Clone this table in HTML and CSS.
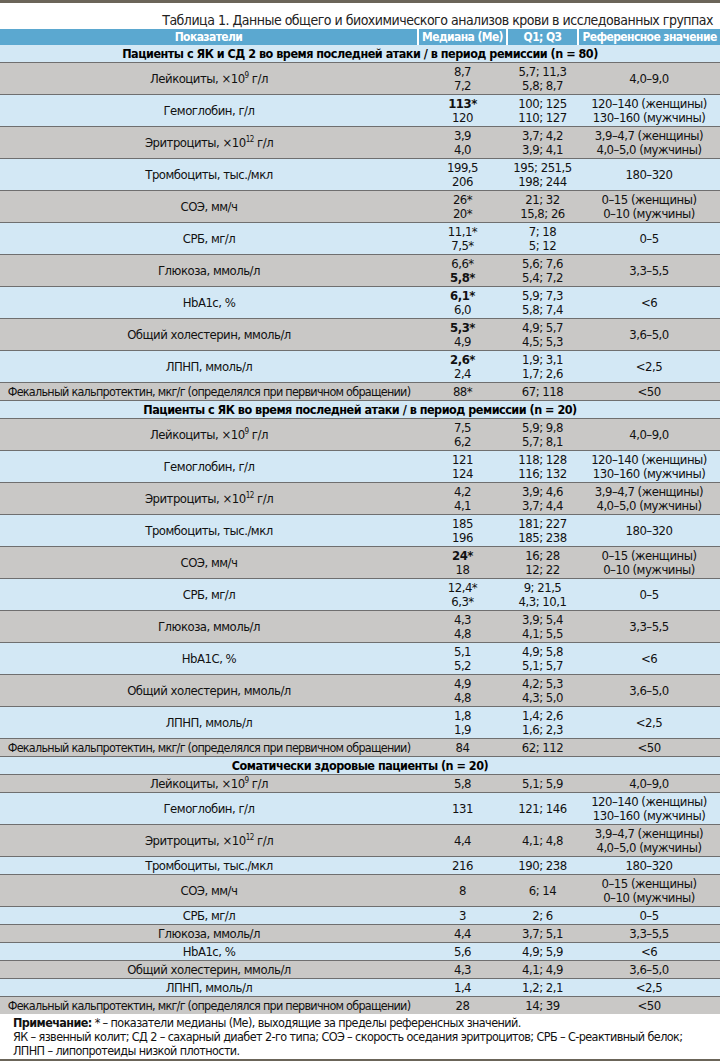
FILE: index.html
```html
<!DOCTYPE html>
<html lang="ru">
<head>
  <meta charset="UTF-8">
  <meta name="viewport" content="width=device-width, initial-scale=1.0">
  <title>Таблица 1</title>
  <link rel="stylesheet" href="styles.css">
</head>
<body>
  <div class="rule"></div>
  <p class="caption">Таблица 1. Данные общего и биохимического анализов крови в исследованных группах</p>

  <table class="data">
    <colgroup>
      <col class="c-name">
      <col class="c-med">
      <col class="c-q">
      <col class="c-ref">
    </colgroup>
    <thead>
      <tr>
        <th>Показатели</th>
        <th>Медиана (Ме)</th>
        <th>Q1; Q3</th>
        <th>Референсное значение</th>
      </tr>
    </thead>
    <tbody>
      <!-- группа 1 -->
      <tr class="group"><td colspan="4">Пациенты с ЯК и СД 2 во время последней атаки / в период ремиссии (n = 80)</td></tr>
      <tr><td>Лейкоциты, ×10<sup>9</sup> г/л</td><td>8,7<br>7,2</td><td>5,7; 11,3<br>5,8; 8,7</td><td>4,0–9,0</td></tr>
      <tr><td>Гемоглобин, г/л</td><td><b>113*</b><br>120</td><td>100; 125<br>110; 127</td><td>120–140 (женщины)<br>130–160 (мужчины)</td></tr>
      <tr><td>Эритроциты, ×10<sup>12</sup> г/л</td><td>3,9<br>4,0</td><td>3,7; 4,2<br>3,9; 4,1</td><td>3,9–4,7 (женщины)<br>4,0–5,0 (мужчины)</td></tr>
      <tr><td>Тромбоциты, тыс./мкл</td><td>199,5<br>206</td><td>195; 251,5<br>198; 244</td><td>180–320</td></tr>
      <tr><td>СОЭ, мм/ч</td><td>26*<br>20*</td><td>21; 32<br>15,8; 26</td><td>0–15 (женщины)<br>0–10 (мужчины)</td></tr>
      <tr><td>СРБ, мг/л</td><td>11,1*<br>7,5*</td><td>7; 18<br>5; 12</td><td>0–5</td></tr>
      <tr><td>Глюкоза, ммоль/л</td><td>6,6*<br><b>5,8*</b></td><td>5,6; 7,6<br>5,4; 7,2</td><td>3,3–5,5</td></tr>
      <tr><td>HbA1c, %</td><td><b>6,1*</b><br>6,0</td><td>5,9; 7,3<br>5,8; 7,4</td><td>&lt;6</td></tr>
      <tr><td>Общий холестерин, ммоль/л</td><td><b>5,3*</b><br>4,9</td><td>4,9; 5,7<br>4,5; 5,3</td><td>3,6–5,0</td></tr>
      <tr><td>ЛПНП, ммоль/л</td><td><b>2,6*</b><br>2,4</td><td>1,9; 3,1<br>1,7; 2,6</td><td>&lt;2,5</td></tr>
      <tr><td class="long">Фекальный кальпротектин, мкг/г (определялся при первичном обращении)</td><td>88*</td><td>67; 118</td><td>&lt;50</td></tr>

      <!-- группа 2 -->
      <tr class="group"><td colspan="4">Пациенты с ЯК во время последней атаки / в период ремиссии (n = 20)</td></tr>
      <tr><td>Лейкоциты, ×10<sup>9</sup> г/л</td><td>7,5<br>6,2</td><td>5,9; 9,8<br>5,7; 8,1</td><td>4,0–9,0</td></tr>
      <tr><td>Гемоглобин, г/л</td><td>121<br>124</td><td>118; 128<br>116; 132</td><td>120–140 (женщины)<br>130–160 (мужчины)</td></tr>
      <tr><td>Эритроциты, ×10<sup>12</sup> г/л</td><td>4,2<br>4,1</td><td>3,9; 4,6<br>3,7; 4,4</td><td>3,9–4,7 (женщины)<br>4,0–5,0 (мужчины)</td></tr>
      <tr><td>Тромбоциты, тыс./мкл</td><td>185<br>196</td><td>181; 227<br>185; 238</td><td>180–320</td></tr>
      <tr><td>СОЭ, мм/ч</td><td><b>24*</b><br>18</td><td>16; 28<br>12; 22</td><td>0–15 (женщины)<br>0–10 (мужчины)</td></tr>
      <tr><td>СРБ, мг/л</td><td>12,4*<br>6,3*</td><td>9; 21,5<br>4,3; 10,1</td><td>0–5</td></tr>
      <tr><td>Глюкоза, ммоль/л</td><td>4,3<br>4,8</td><td>3,9; 5,4<br>4,1; 5,5</td><td>3,3–5,5</td></tr>
      <tr><td>HbA1C, %</td><td>5,1<br>5,2</td><td>4,9; 5,8<br>5,1; 5,7</td><td>&lt;6</td></tr>
      <tr><td>Общий холестерин, ммоль/л</td><td>4,9<br>4,8</td><td>4,2; 5,3<br>4,3; 5,0</td><td>3,6–5,0</td></tr>
      <tr><td>ЛПНП, ммоль/л</td><td>1,8<br>1,9</td><td>1,4; 2,6<br>1,6; 2,3</td><td>&lt;2,5</td></tr>
      <tr><td class="long">Фекальный кальпротектин, мкг/г (определялся при первичном обращении)</td><td>84</td><td>62; 112</td><td>&lt;50</td></tr>

      <!-- группа 3 -->
      <tr class="group"><td colspan="4">Соматически здоровые пациенты (n = 20)</td></tr>
      <tr><td>Лейкоциты, ×10<sup>9</sup> г/л</td><td>5,8</td><td>5,1; 5,9</td><td>4,0–9,0</td></tr>
      <tr><td>Гемоглобин, г/л</td><td>131</td><td>121; 146</td><td>120–140 (женщины)<br>130–160 (мужчины)</td></tr>
      <tr><td>Эритроциты, ×10<sup>12</sup> г/л</td><td>4,4</td><td>4,1; 4,8</td><td>3,9–4,7 (женщины)<br>4,0–5,0 (мужчины)</td></tr>
      <tr><td>Тромбоциты, тыс./мкл</td><td>216</td><td>190; 238</td><td>180–320</td></tr>
      <tr><td>СОЭ, мм/ч</td><td>8</td><td>6; 14</td><td>0–15 (женщины)<br>0–10 (мужчины)</td></tr>
      <tr><td>СРБ, мг/л</td><td>3</td><td>2; 6</td><td>0–5</td></tr>
      <tr><td>Глюкоза, ммоль/л</td><td>4,4</td><td>3,7; 5,1</td><td>3,3–5,5</td></tr>
      <tr><td>HbA1c, %</td><td>5,6</td><td>4,9; 5,9</td><td>&lt;6</td></tr>
      <tr><td>Общий холестерин, ммоль/л</td><td>4,3</td><td>4,1; 4,9</td><td>3,6–5,0</td></tr>
      <tr><td>ЛПНП, ммоль/л</td><td>1,4</td><td>1,2; 2,1</td><td>&lt;2,5</td></tr>
      <tr><td class="long">Фекальный кальпротектин, мкг/г (определялся при первичном обращении)</td><td>28</td><td>14; 39</td><td>&lt;50</td></tr>
    </tbody>
  </table>

  <p class="note">
    <b>Примечание:</b> * – показатели медианы (Ме), выходящие за пределы референсных значений.<br>
    ЯК – язвенный колит; СД 2 – сахарный диабет 2-го типа; СОЭ – скорость оседания эритроцитов; СРБ – С-реактивный белок;<br>
    ЛПНП – липопротеиды низкой плотности.
  </p>
  <div class="rule rule-bottom"></div>
</body>
</html>
```

FILE: styles.css
```css
body {
  margin: 0;
  width: 720px;
  font-family: 'Liberation Sans Narrow', 'DejaVu Sans Condensed', Arial, sans-serif;
  font-size: 13px;
  letter-spacing: -0.5px;
  color: #111;
  background-color: #fff;
}

.rule {
  height: 3px;
  background-color: #6b6559;
}

.rule-bottom {
  height: 2px;
}

.caption {
  margin: 0;
  padding: 8px 7px 0 0;
  line-height: 18px;
  font-size: 14px;
  text-align: right;
  color: #222;
}

.data {
  width: 100%;
  border-collapse: collapse;
  table-layout: fixed;
}

.c-name { width: 418px; }
.c-med { width: 89px; }
.c-q { width: 71px; }
.c-ref { width: 142px; }

.data th {
  padding: 1px 0;
  line-height: 14px;
  font-size: 12px;
  letter-spacing: -0.6px;
  font-weight: bold;
  color: #fff;
  background-color: #5ba8d0;
  border-left: 2px solid #fff;
  white-space: nowrap;
  overflow: hidden;
}

.data th:first-child {
  border-left: none;
}

.data td {
  padding: 2px 0 1px;
  line-height: 14px;
  text-align: center;
  white-space: nowrap;
  border-top: 1px solid #6f6f6f;
}

.data td.long {
  font-size: 12.5px;
  letter-spacing: -0.75px;
}

.data tbody tr:nth-child(odd) td {
  background-color: #d3e8f5;
}

.data tbody tr:nth-child(even) td {
  background-color: #c9c8c6;
}

.data tr.group td {
  font-size: 12.5px;
  font-weight: bold;
  color: #000;
}

.data thead + tbody tr:first-child td {
  border-top: none;
}

sup {
  font-size: 8px;
  line-height: 0;
  vertical-align: 5px;
}

.note {
  margin: 0;
  padding: 2px 0 1px 13px;
  line-height: 14px;
  font-size: 12.5px;
  letter-spacing: -0.6px;
  white-space: nowrap;
  color: #111;
}
```
